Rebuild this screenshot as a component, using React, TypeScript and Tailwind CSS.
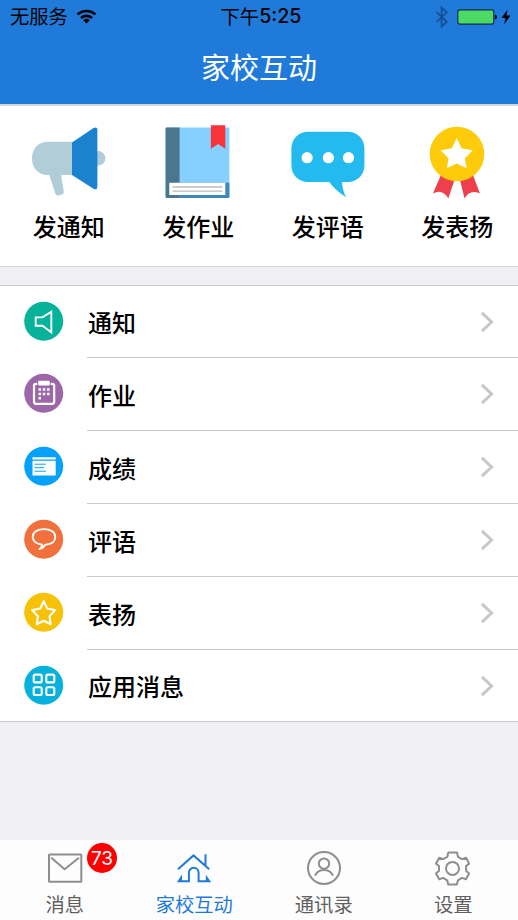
import { type PropsWithChildren, type ReactNode } from "react"

export default function App() {
  return (
    <main className="flex h-[920px] w-[518px] flex-col overflow-hidden bg-[#efeff4] text-black font-['Noto_Sans_CJK_SC','Noto_Sans',sans-serif]">
      <header className="h-[106px] shrink-0 border-b-2 border-[#d5d6da] bg-[#1f7ada]">
        <StatusBar />
        <h1 className="mt-0.5 h-[62px] text-center text-[29px] leading-[62px] text-white">
          家校互动
        </h1>
      </header>

      <section className="h-[161px] shrink-0 border-b border-[#d2d2d6] bg-white">
        <div className="ml-1 grid w-[518px] grid-cols-4 pt-4">
          {actions.map(({ label, icon }) => (
            <button key={label} className="flex flex-col items-center">
              <Glyph size="h-20 w-20" box="0 0 80 80">
                {icon}
              </Glyph>
              <span className="mt-1.5 text-2xl font-medium leading-9">
                {label}
              </span>
            </button>
          ))}
        </div>
      </section>

      <ul className="mt-[18px] shrink-0 border-y border-[#cbcbcf] bg-white">
        {rows.map(({ label, color, icon }, i) => {
          const isLast = i === rows.length - 1
          const isEdge = i === 0 || isLast
          return (
            <li
              key={label}
              className={`flex pl-6 ${isEdge ? "h-[72px]" : "h-[73px]"} ${isLast ? "-mb-px" : ""}`}
            >
              <Glyph size="mt-[15px] h-10 w-10 shrink-0" box="0.3 -0.2 40 40">
                <circle cx="20" cy="20" r="19.5" fill={color} />
                {icon}
              </Glyph>
              <div
                className={`ml-[23px] flex flex-1 items-center justify-between pr-[23px] ${isLast ? "" : "border-b border-[#c9c9cc]"}`}
              >
                <span
                  className={`pl-px text-2xl font-medium ${isEdge ? "" : "pt-px"}`}
                >
                  {label}
                </span>
                <Glyph size="h-6 w-4" box="0 0 16 24">
                  <path
                    d="M2.9 2.8l9.7 9.2-9.7 9.2"
                    fill="none"
                    stroke="#c7c7cc"
                    strokeWidth="3"
                  />
                </Glyph>
              </div>
            </li>
          )
        })}
      </ul>

      <nav className="mt-auto grid h-20 shrink-0 grid-cols-4 bg-[#fdfdfd]">
        {tabs.map(({ label, icon, active, badge }) => (
          <button
            key={label}
            className={`relative flex flex-col items-center pt-2 ${active ? "text-[#1f7ada]" : "text-[#8e8e8e]"}`}
          >
            <Glyph size="h-10 w-10" box="0 0 40 40">
              <g fill="none" stroke="currentColor" strokeWidth="2">
                {icon}
              </g>
            </Glyph>
            <span
              className={`mt-px text-[19.3px] leading-[30px] ${active ? "" : "text-[#5f5f5f]"}`}
            >
              {label}
            </span>
            {badge && (
              <span className="absolute left-[87px] top-[3px] h-[30px] w-[30px] rounded-full bg-[#fe0000] text-center font-['Inter',sans-serif] text-[19px] leading-[31px] text-white">
                {badge}
              </span>
            )}
          </button>
        ))}
      </nav>
    </main>
  )
}

function StatusBar() {
  return (
    <div className="grid h-[33px] grid-cols-[1fr_auto_1fr] items-center text-[19.3px] leading-8">
      <div className="flex items-center pl-2.5">
        <span className="-mt-px">无服务</span>
        <Glyph size="-mt-px ml-[7px] h-5 w-6" box="0 0 24 20">
          <g fill="none" stroke="#000" strokeWidth="2.6">
            <path d="M2.6 8.4a13.2 13.2 0 0 1 17.8 0" />
            <path d="M6 12a8.2 8.2 0 0 1 11 0" />
          </g>
          <path d="M8.2 14.3a5 5 0 0 1 6.6 0l-3.3 3.2z" />
        </Glyph>
      </div>
      <span className="-mt-px flex pl-1">
        下午
        <span className="font-['Inter',sans-serif] text-[19.6px] font-medium">
          5:25
        </span>
      </span>
      <div className="flex items-center justify-end pr-[7.5px]">
        <Glyph size="h-6 w-4" box="0 0 16 24">
          <path
            d="M2.5 6.8l10.3 10L7.6 21.5v-19l5.2 4.7L2.5 17"
            fill="none"
            stroke="#14508f"
            strokeWidth="1.7"
          />
        </Glyph>
        <Glyph size="ml-[7px] h-4 w-10" box="0 0 40 16">
          <rect
            x=".8"
            y=".9"
            width="36"
            height="14.2"
            rx="2"
            fill="#4cd964"
            stroke="#0c2c50"
            strokeWidth="1.2"
          />
          <path d="M38 5.4q2 .8 2 2.6t-2 2.6z" />
        </Glyph>
        <Glyph size="ml-1 h-4 w-[10px]" box="0 0 10 16">
          <path d="M6.5.5L.5 9h4l-1.3 6.5L9.5 6.4h-4z" />
        </Glyph>
      </div>
    </div>
  )
}

function Glyph({
  children,
  size,
  box,
}: PropsWithChildren<{ size: string; box: string }>) {
  return (
    <svg className={size} viewBox={box} aria-hidden="true">
      {children}
    </svg>
  )
}

const actions: { label: string; icon: ReactNode }[] = [
  {
    label: "发通知",
    icon: (
      <>
        <path
          d="M43.5 19.7H19C9 19.7 3 27 3 36.4S9 53 19 53h1.3l6 18.6q.8 2.2 3 1.8l4-1q2-.7 1.5-2.8L32 53h11.5z"
          fill="#b0cdd8"
        />
        <circle cx="69.2" cy="36.3" r="7.2" fill="#b0cdd8" />
        <path
          d="M43 20.4L64.5 6q3.8-1.8 3.9 1.8v56.8q-.2 4-3.9 2.2L43 53z"
          fill="#1b82ce"
        />
      </>
    ),
  },
  {
    label: "发作业",
    icon: (
      <>
        <rect x="7.6" y="5.4" width="63.8" height="70.6" rx="1" fill="#85d0ff" />
        <path d="M21.6 60.7h49.8V75q0 1-1 1H21.6z" fill="#3b8abb" />
        <path d="M8.6 5.4h13V76h-13q-1 0-1-1V6.4q0-1 1-1z" fill="#4c758e" />
        <path d="M11.3 60.7h56V73h-56z" fill="#fff" />
        <path d="M14.6 65h49.8M14.6 69.1h49.8" stroke="#bcbcbc" strokeWidth="1.4" />
        <path d="M52.9 3.3h14.4v23.4l-7.2-4.6-7.2 4.6z" fill="#f93338" />
      </>
    ),
  },
  {
    label: "发评语",
    icon: (
      <>
        <rect x="3.4" y="9.7" width="73" height="50.4" rx="16.5" fill="#23bbef" />
        <path d="M40.8 59.5q7 9.5 17.4 15.7-3.8-6.6-4.2-15.7z" fill="#23bbef" />
        <g fill="#fff">
          <circle cx="19.1" cy="35.7" r="5.6" />
          <circle cx="40.4" cy="35.7" r="5.6" />
          <circle cx="60.5" cy="35.7" r="5.6" />
        </g>
      </>
    ),
  },
  {
    label: "发表扬",
    icon: (
      <>
        <path d="M24 53l-8.1 18.4q9.6-5 15.4 5.1L37.8 57z" fill="#ee404c" />
        <path d="M56 53l6.9 18.4q-10-4.4-15.3 5.1L42.7 57z" fill="#ee404c" />
        <circle cx="40" cy="32" r="27.3" fill="#fdcb09" />
        <path
          d="M39.7 16l4.9 10.3 11.2 1.9-8 8.2 1.8 9.9-9.9-4.8-9.9 4.8 1.8-9.9-8-8.2 11.2-1.9z"
          fill="#fff"
        />
      </>
    ),
  },
]

const rows: { label: string; color: string; icon: ReactNode }[] = [
  {
    label: "通知",
    color: "#07b29b",
    icon: (
      <path
        d="M12 16.2h6.8l8.8-5.6v20.6l-8.8-6.6H12z"
        fill="none"
        stroke="#fff"
        strokeWidth="1.9"
      />
    ),
  },
  {
    label: "作业",
    color: "#9c66a8",
    icon: (
      <>
        <rect
          x="10.3"
          y="10.6"
          width="20.2"
          height="20"
          rx="2"
          fill="none"
          stroke="#fff"
          strokeWidth="2.2"
        />
        <rect x="13.6" y="6.8" width="13.4" height="6.4" fill="#9c66a8" />
        <rect x="14.5" y="7.6" width="11.6" height="4.6" rx="1" fill="#fff" />
        <path
          d="M14.8 16.4H26M14.8 20.7H26M14.8 25h2.6"
          stroke="#fff"
          strokeWidth="2.5"
          strokeDasharray="2.5 1.8"
        />
      </>
    ),
  },
  {
    label: "成绩",
    color: "#05a1fb",
    icon: (
      <>
        <path d="M8.8 11H32v2.3H8.8zM8.8 14.5H32v14.8H8.8z" fill="#fff" />
        <path d="M10.8 18h11.4M10.8 21.5h9.6M10.8 25h11.4" stroke="#05a1fb" />
      </>
    ),
  },
  {
    label: "评语",
    color: "#f0713d",
    icon: (
      <path
        d="M18.4 25.4C12.5 25 9 21.7 9 17.8c0-4.6 4.6-7.9 11.3-7.9s11.3 3.3 11.3 7.9c0 4.3-3.7 7.2-9.8 7.6q-2.4 3.8-6 4.5 2.4-2 2.6-4.5z"
        fill="none"
        stroke="#fff"
        strokeWidth="1.8"
        strokeLinejoin="round"
      />
    ),
  },
  {
    label: "表扬",
    color: "#f7c106",
    icon: (
      <path
        d="M20 9l3.5 7.3 8 1.6-5.7 6.1 1.1 8-6.9-3.5-6.9 3.5 1.1-8-5.7-6.1 8-1.6z"
        fill="none"
        stroke="#fff"
        strokeWidth="2.1"
        strokeLinejoin="round"
      />
    ),
  },
  {
    label: "应用消息",
    color: "#08b1dc",
    icon: (
      <g fill="none" stroke="#fff" strokeWidth="2.1">
        <rect x="10" y="9.4" width="8" height="7.8" rx="1.5" />
        <rect x="22.6" y="9.4" width="8" height="7.8" rx="1.5" />
        <rect x="10" y="22" width="8" height="7.8" rx="1.5" />
        <rect x="22.6" y="22" width="8" height="7.8" rx="1.5" />
      </g>
    ),
  },
]

const tabs: {
  label: string
  icon: ReactNode
  active?: boolean
  badge?: number
}[] = [
  {
    label: "消息",
    badge: 73,
    icon: (
      <>
        <rect x="4" y="6.5" width="32.3" height="27.2" rx=".5" />
        <path d="M6.3 9.7l13.3 11.6L34 9.7" />
      </>
    ),
  },
  {
    label: "家校互动",
    active: true,
    icon: (
      <>
        <path d="M4 21.2L19.5 7.4l15.7 13.8M31.5 6.3v11.9" />
        <path d="M4.8 33.2h10.1v-8.5a4.8 4.8 0 0 1 9.7 0v8.5h10.6M7 29.8l-2.2 3.4H7zM32.8 29.8l2.4 3.4h-2.4z" />
      </>
    ),
  },
  {
    label: "通讯录",
    icon: (
      <>
        <circle cx="20" cy="20" r="16" />
        <circle cx="20" cy="15.6" r="5.2" />
        <path d="M11 27.6q2.6-5.6 9-5.6t9 5.6" />
      </>
    ),
  },
  {
    label: "设置",
    icon: (
      <>
        <circle cx="19.5" cy="20.4" r="6.5" />
        <path
          d="M15.3 4.5h8.7l1 4.3 4.1 2.3 4-1.4 3 5.9-3 2.4v4.8l3 2.6-3.2 5.9-4-1.4-4 2.4-1 4.2h-8.7l-1-4.2-4-2.4-4 1.4L3 25.4l3-2.6V18l-3-2.4 3.3-5.9 3.8 1.4 4.2-2.3z"
          strokeLinejoin="round"
        />
      </>
    ),
  },
]
